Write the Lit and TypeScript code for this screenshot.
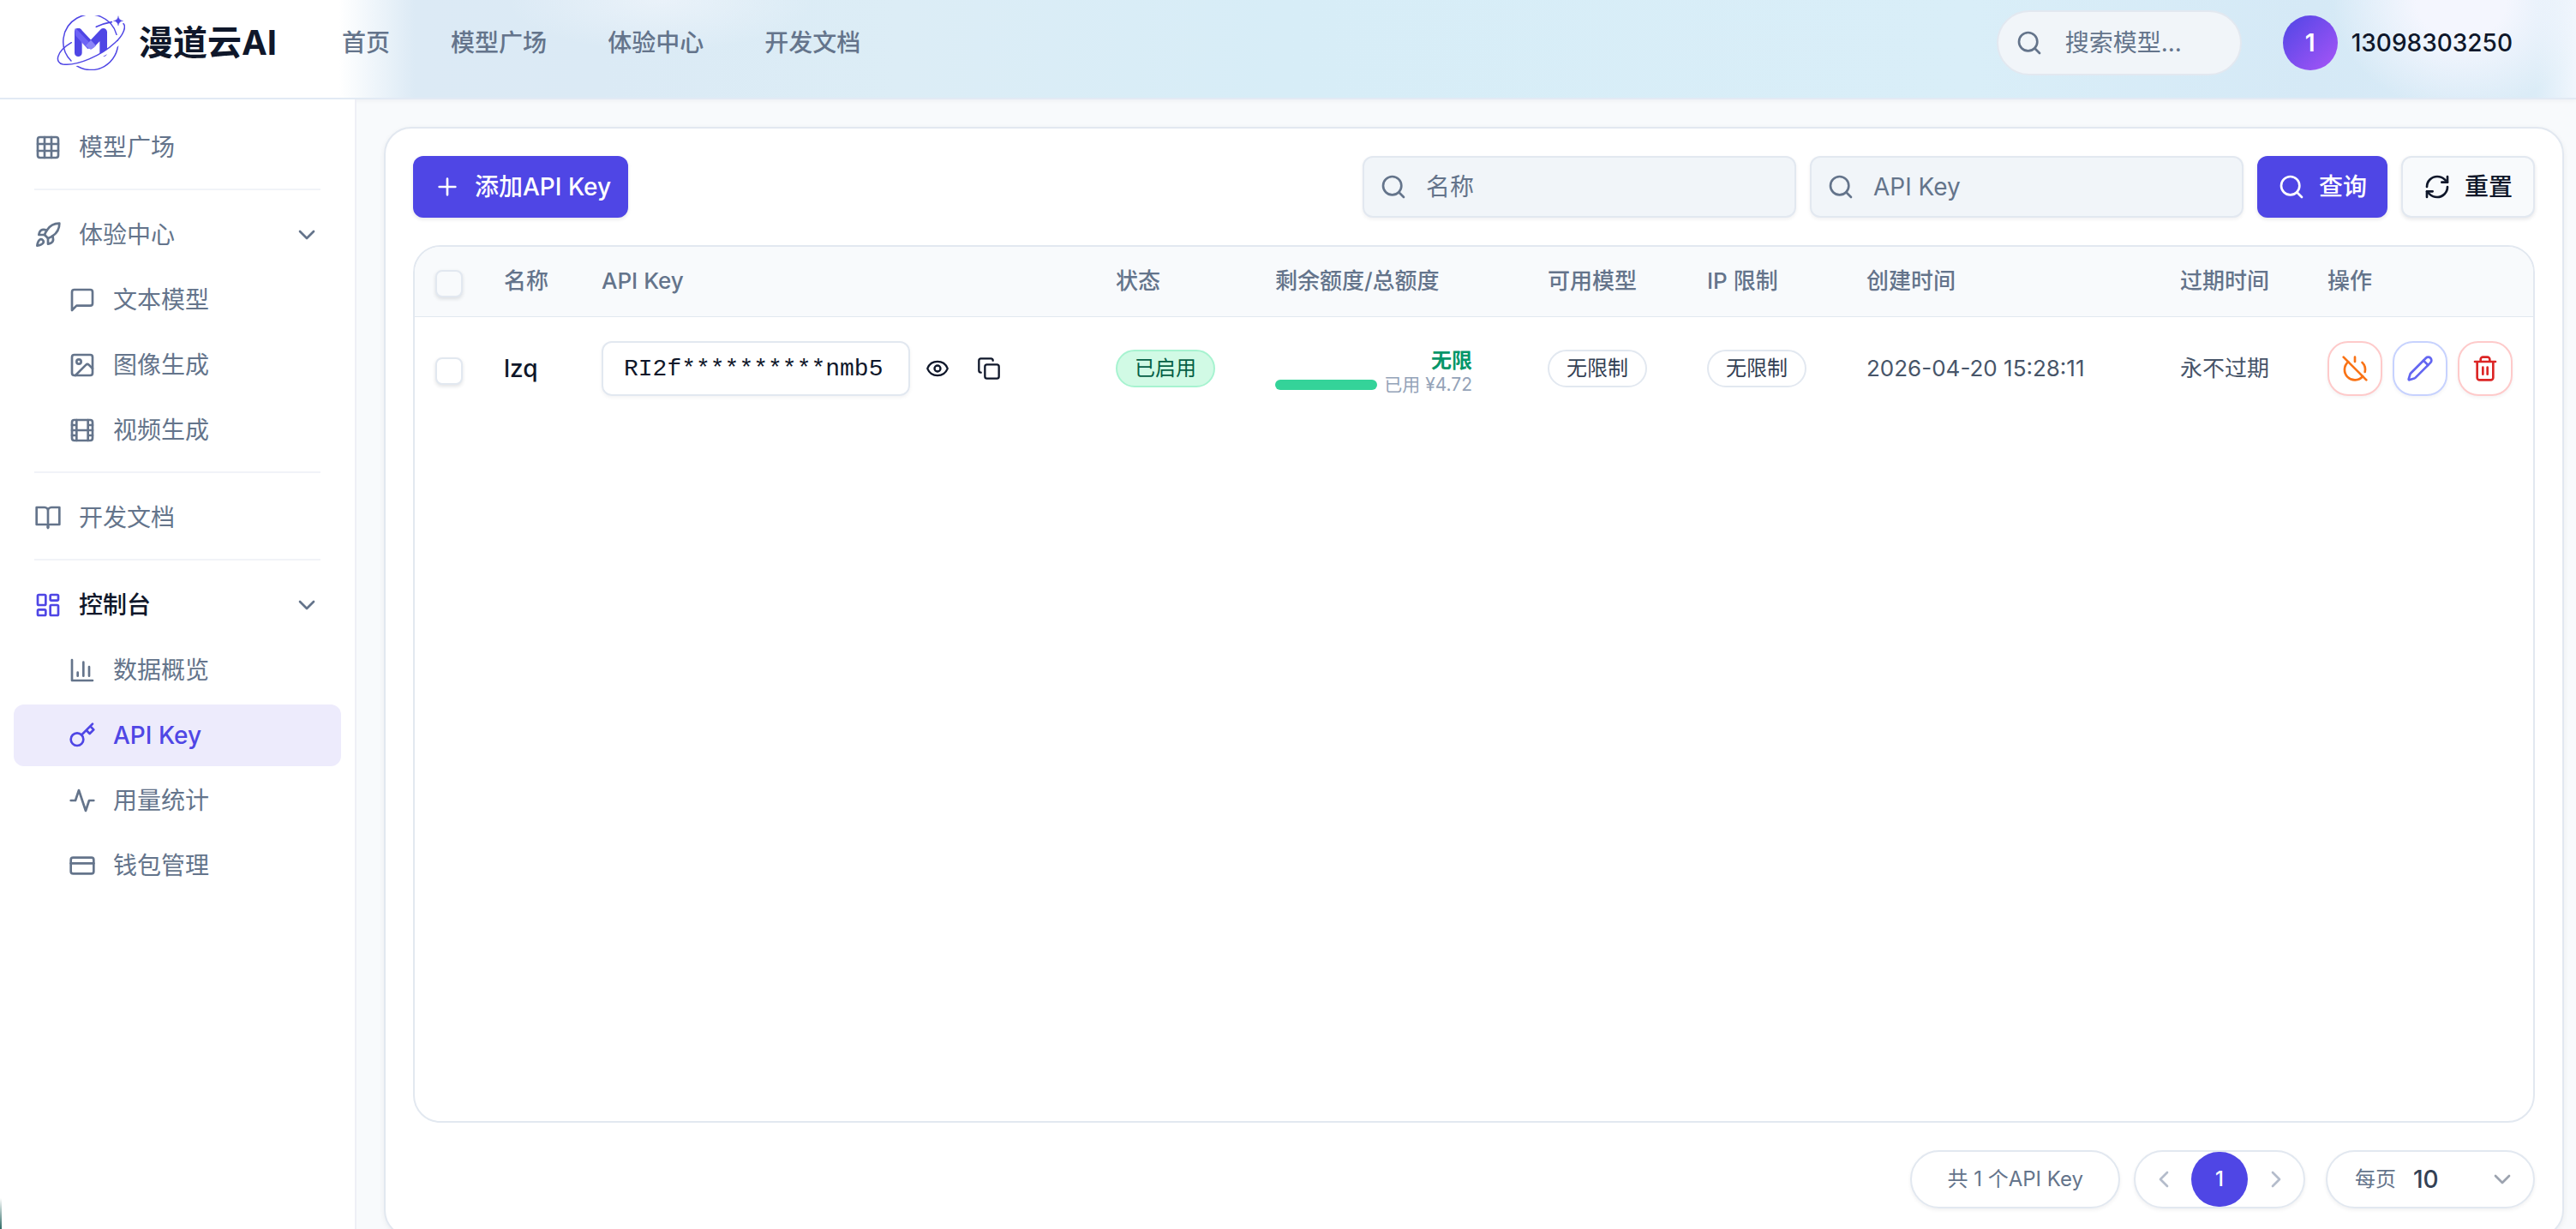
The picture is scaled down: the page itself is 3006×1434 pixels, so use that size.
import { LitElement, html, css, svg, nothing, TemplateResult } from "lit";
import { customElement } from "lit/decorators.js";
import { classMap } from "lit/directives/class-map.js";

const shapes: Record<string, TemplateResult> = {
  grid: svg`<rect x="3" y="3" width="18" height="18" rx="2"/><path d="M3 9h18M3 15h18M9 3v18M15 3v18"/>`,
  rocket: svg`<path d="M4.5 16.5c-1.5 1.26-2 5-2 5s3.74-.5 5-2c.71-.84.7-2.13-.09-2.91a2.18 2.18 0 0 0-2.91-.09z"/><path d="m12 15-3-3a22 22 0 0 1 2-3.95A12.88 12.88 0 0 1 22 2c0 2.72-.78 7.5-6 11a22.35 22.35 0 0 1-4 2z"/><path d="M9 12H4s.55-3.03 2-4c1.62-1.08 5 0 5 0"/><path d="M12 15v5s3.03-.55 4-2c1.08-1.62 0-5 0-5"/>`,
  message: svg`<path d="M21 15a2 2 0 0 1-2 2H7l-4 4V5a2 2 0 0 1 2-2h14a2 2 0 0 1 2 2z"/>`,
  image: svg`<rect x="3" y="3" width="18" height="18" rx="2"/><circle cx="9" cy="9" r="2"/><path d="m21 15-3.086-3.086a2 2 0 0 0-2.828 0L6 21"/>`,
  film: svg`<rect x="3" y="3" width="18" height="18" rx="2"/><path d="M7 3v18M17 3v18M3 12h18M3 7.5h4M3 16.5h4M17 7.5h4M17 16.5h4"/>`,
  book: svg`<path d="M12 21V6a3 3 0 0 0-3-3H2v15h8a2 2 0 0 1 2 3a2 2 0 0 1 2-3h8V3h-7a3 3 0 0 0-3 3"/>`,
  dashboard: svg`<rect x="3" y="3" width="7" height="9" rx="1"/><rect x="14" y="3" width="7" height="5" rx="1"/><rect x="14" y="12" width="7" height="9" rx="1"/><rect x="3" y="16" width="7" height="5" rx="1"/>`,
  chart: svg`<path d="M3 3v18h18M18 17V9M13 17V5M8 17v-3"/>`,
  key: svg`<circle cx="7.5" cy="15.5" r="5.5"/><path d="m21 2-9.6 9.6M15.5 7.5l3 3L22 7l-3-3"/>`,
  activity: svg`<path d="M22 12h-4l-3 9L9 3l-3 9H2"/>`,
  card: svg`<rect x="2" y="5" width="20" height="14" rx="2"/><path d="M2 10h20"/>`,
  down: svg`<path d="m6 9 6 6 6-6"/>`,
  left: svg`<path d="m15 18-6-6 6-6"/>`,
  right: svg`<path d="m9 18 6-6-6-6"/>`,
  search: svg`<circle cx="11" cy="11" r="8"/><path d="m21 21-4.3-4.3"/>`,
  plus: svg`<path d="M5 12h14M12 5v14"/>`,
  refresh: svg`<path d="M3 12a9 9 0 0 1 9-9 9.75 9.75 0 0 1 6.74 2.74L21 8"/><path d="M21 3v5h-5"/><path d="M21 12a9 9 0 0 1-9 9 9.75 9.75 0 0 1-6.74-2.74L3 16"/><path d="M8 16H3v5"/>`,
  eye: svg`<path d="M2.062 12.348a1 1 0 0 1 0-.696 10.75 10.75 0 0 1 19.876 0 1 1 0 0 1 0 .696 10.75 10.75 0 0 1-19.876 0"/><circle cx="12" cy="12" r="3"/>`,
  copy: svg`<rect x="8" y="8" width="14" height="14" rx="2"/><path d="M4 16c-1.1 0-2-.9-2-2V4c0-1.1.9-2 2-2h10c1.1 0 2 .9 2 2"/>`,
  powerOff: svg`<path d="M18.36 6.64A9 9 0 0 1 20.77 15"/><path d="M6.16 6.16a9 9 0 1 0 12.68 12.68"/><path d="M12 2v4"/><path d="m2 2 20 20"/>`,
  pencil: svg`<path d="M21.174 6.812a1 1 0 0 0-3.986-3.987L3.842 16.174a2 2 0 0 0-.5.83l-1.321 4.352a.5.5 0 0 0 .623.622l4.353-1.32a2 2 0 0 0 .83-.497z"/><path d="m15 5 4 4"/>`,
  trash: svg`<path d="M3 6h18M19 6v14c0 1-1 2-2 2H7c-1 0-2-1-2-2V6M8 6V4c0-1 1-2 2-2h4c1 0 2 1 2 2v2M10 11v6M14 11v6"/>`,
};

const icon = (name: string, size = 32, stroke = 2) => html`
  <svg class="icon" width=${size} height=${size} viewBox="0 0 24 24" fill="none" stroke="currentColor"
    stroke-width=${stroke} stroke-linecap="round" stroke-linejoin="round" aria-hidden="true">${shapes[name]}</svg>`;

interface NavEntry {
  label: string;
  icon: string;
  active?: boolean;
  children?: NavEntry[];
}

const sections: NavEntry[] = [
  { label: "模型广场", icon: "grid" },
  {
    label: "体验中心",
    icon: "rocket",
    children: [
      { label: "文本模型", icon: "message" },
      { label: "图像生成", icon: "image" },
      { label: "视频生成", icon: "film" },
    ],
  },
  { label: "开发文档", icon: "book" },
  {
    label: "控制台",
    icon: "dashboard",
    active: true,
    children: [
      { label: "数据概览", icon: "chart" },
      { label: "API Key", icon: "key", active: true },
      { label: "用量统计", icon: "activity" },
      { label: "钱包管理", icon: "card" },
    ],
  },
];

const base = css`
  :host {
    display: block;
    font-family: Inter, "Noto Sans CJK SC", sans-serif;
    font-size: 28px;
    line-height: 40px;
    color: #0f172a;
  }
  * {
    box-sizing: border-box;
  }
  a {
    color: inherit;
    text-decoration: none;
  }
  button,
  input,
  select {
    font: inherit;
    color: inherit;
    margin: 0;
    padding: 0;
    border: 0;
    background: none;
    outline: none;
  }
  button {
    cursor: pointer;
  }
  .icon {
    display: block;
    flex: none;
  }
  input::placeholder {
    color: #64748b;
    opacity: 1;
  }
`;

@customElement("top-bar")
class TopBar extends LitElement {
  static styles = [
    base,
    css`
      .bar {
        display: flex;
        align-items: center;
        height: 116px;
        padding: 0 74px 14px 66px;
        border-bottom: 2px solid #e2eaf4;
        box-shadow: 0 2px 4px rgba(15, 23, 42, 0.04);
        background:
          radial-gradient(ellipse 150px 130px at 2872px 0, #f4f6fe 35%, rgba(244, 246, 254, 0) 100%),
          radial-gradient(ellipse 180px 60px at 770px 0, rgba(240, 245, 251, 0.7), rgba(240, 245, 251, 0)),
          linear-gradient(90deg, #fff 0, #fff 396px, #dceaf5 484px, #dbeaf5 700px, #dcedf6 1050px, #d7edf7 1500px,
            #d9eef8 2300px, #d5e9f6 2700px, #dbecf7 2960px, #f0f6fd 100%);
      }
      .brand {
        display: flex;
        align-items: center;
        gap: 16px;
        font-size: 40px;
        font-weight: 700;
        margin-right: 76px;
      }
      .logo {
        display: block;
      }
      .links {
        display: flex;
        gap: 71px;
        color: #64748b;
        font-weight: 500;
      }
      .search {
        display: flex;
        align-items: center;
        gap: 26px;
        width: 286px;
        height: 76px;
        margin-left: auto;
        padding: 0 20px;
        border: 2px solid #e2e8f0;
        border-radius: 38px;
        background: #f1f5f9;
        color: #64748b;
      }
      .search input {
        width: 100%;
        min-width: 0;
      }
      .user {
        display: flex;
        align-items: center;
        gap: 16px;
        margin-left: 48px;
        font-weight: 500;
      }
      .avatar {
        display: grid;
        place-items: center;
        width: 64px;
        height: 64px;
        border-radius: 50%;
        background: linear-gradient(135deg, #4f46e5, #a855f7);
        color: #fff;
        font-weight: 600;
      }
    `,
  ];

  render() {
    return html`
      <header class="bar">
        <a class="brand" href="#">
          <svg class="logo" width="80" height="64" viewBox="48 54 240 192" fill="none" stroke="#4f46e5"
            stroke-linecap="round" stroke-linejoin="round" aria-hidden="true">
            <path d="M258 121A95 95 0 1 0 99 213M113 227A95 95 0 0 0 263 143" stroke-width="4.5" />
            <path d="M124 185V112" stroke-width="26" />
            <path d="M124 112L168 158L212 112V185" stroke-width="26" />
            <path d="M115 103L168 158L158 168L118 124Z" fill="#6d63f5" stroke="#6d63f5" stroke-width="6" />
            <path d="M168 140L186 160L168 174L150 160Z" fill="#8b85f8" stroke="none" />
            <path d="M268 148C220 196 130 232 80 225" stroke="#fff" stroke-width="14" />
            <path d="M282 83C292 92 284 122 252 150C205 194 120 232 70 225C42 220 44 182 100 149" stroke-width="4.5" />
            <path d="M187 94Q212 82 241 77" stroke-width="5" />
            <path d="M264 57Q266 71 281 73Q266 75 264 90Q262 75 247 73Q262 71 264 57Z" fill="#4f46e5" stroke-width="1" />
          </svg>
          <span>漫道云AI</span>
        </a>
        <nav class="links">
          ${["首页", "模型广场", "体验中心", "开发文档"].map((t) => html`<a href="#">${t}</a>`)}
        </nav>
        <label class="search">${icon("search")}<input type="search" aria-label="搜索模型" placeholder="搜索模型..." /></label>
        <a class="user" href="#"><span class="avatar">1</span><span>13098303250</span></a>
      </header>
    `;
  }
}

@customElement("side-nav")
class SideNav extends LitElement {
  static styles = [
    base,
    css`
      .nav {
        height: 100%;
        padding: 20px 16px;
        color: #64748b;
      }
      .section + .section {
        margin-top: 12px;
      }
      .section + .section::before {
        content: "";
        display: block;
        height: 2px;
        margin: 0 24px 16px;
        background: #f1f3f8;
      }
      .group {
        display: flex;
        flex-direction: column;
        gap: 4px;
      }
      .item {
        display: flex;
        align-items: center;
        gap: 20px;
        width: 100%;
        height: 72px;
        padding: 0 24px;
        border-radius: 12px;
        text-align: left;
        font-weight: 400;
      }
      .sub {
        padding-left: 64px;
      }
      .chevron {
        margin-left: auto;
      }
      .open {
        color: #0f172a;
        font-weight: 500;
      }
      .open .lead {
        color: #4f46e5;
      }
      .open .chevron {
        color: #64748b;
      }
      .current {
        background: #edebfc;
        color: #4f46e5;
        font-weight: 500;
      }
    `,
  ];

  private head(e: NavEntry) {
    return e.children
      ? html`<button class=${classMap({ item: true, open: !!e.active })} type="button" aria-expanded="true">
          <span class="lead">${icon(e.icon)}</span><span>${e.label}</span>
          <span class="chevron">${icon("down")}</span>
        </button>`
      : html`<a class="item" href="#">${icon(e.icon)}<span>${e.label}</span></a>`;
  }

  render() {
    return html`
      <nav class="nav">
        ${sections.map(
          (s) => html`
            <div class="section">
              <div class="group">
                ${this.head(s)}
                ${(s.children ?? []).map(
                  (c) => html`<a class=${classMap({ item: true, sub: true, current: !!c.active })} href="#"
                    aria-current=${c.active ? "page" : nothing}>${icon(c.icon)}<span>${c.label}</span></a>`
                )}
              </div>
            </div>
          `
        )}
      </nav>
    `;
  }
}

@customElement("key-panel")
class KeyPanel extends LitElement {
  static styles = [
    base,
    css`
      .panel {
        display: flex;
        flex-direction: column;
        gap: 32px;
        height: 100%;
        padding: 32px;
        border: 2px solid #e2e8f0;
        border-radius: 32px;
        background: #fff;
        box-shadow: 0 2px 6px rgba(15, 23, 42, 0.06);
      }
      .toolbar {
        display: flex;
        gap: 16px;
      }
      .btn {
        display: flex;
        align-items: center;
        gap: 16px;
        height: 72px;
        padding: 0 24px;
        border-radius: 12px;
        font-weight: 500;
        white-space: nowrap;
        box-shadow: 0 2px 4px rgba(15, 23, 42, 0.1);
      }
      .primary {
        background: #4f46e5;
        color: #fff;
      }
      .plain {
        border: 2px solid #e2e8f0;
        background: #f8fafc;
      }
      .first {
        margin-right: auto;
        padding-right: 20px;
      }
      .field {
        display: flex;
        align-items: center;
        gap: 22px;
        width: 506px;
        height: 72px;
        padding: 0 18px;
        border: 2px solid #e2e8f0;
        border-radius: 12px;
        background: #f1f5f9;
        color: #64748b;
        box-shadow: 0 2px 4px rgba(15, 23, 42, 0.06);
      }
      .field input {
        flex: 1;
        min-width: 0;
      }
      .frame {
        flex: 1;
        border: 2px solid #e2e8f0;
        border-radius: 32px;
        overflow: hidden;
      }
      .keys {
        width: 100%;
        table-layout: fixed;
        border-collapse: collapse;
        text-align: left;
        white-space: nowrap;
      }
      .keys th {
        height: 81px;
        padding: 0 24px;
        border-bottom: 1px solid #e2e8f0;
        background: #f8fafc;
        color: #64748b;
        font-size: 26px;
        font-weight: 500;
      }
      .keys td {
        height: 122px;
        padding: 0 24px;
      }
      .c-check { width: 80px; }
      .c-name { width: 114px; }
      .c-key { width: 600px; }
      .c-state { width: 186px; }
      .c-quota { width: 318px; }
      .c-time { width: 366px; }
      .c-expire { width: 172px; }
      .c-ops { width: 264px; }
      .check {
        display: block;
        appearance: none;
        width: 32px;
        height: 32px;
        margin-top: 6px;
        border: 2px solid #e2e8f0;
        border-radius: 8px;
        background: #fff;
        box-shadow: 0 2px 4px rgba(15, 23, 42, 0.12);
      }
      .keys th .check {
        background: #f8fafc;
      }
      .name {
        font-weight: 500;
      }
      .secret {
        display: flex;
        align-items: center;
      }
      .secret input {
        width: 360px;
        height: 64px;
        margin-right: 18px;
        padding: 0 24px;
        border: 2px solid #e2e8f0;
        border-radius: 12px;
        font-family: "Liberation Mono", monospace;
        box-shadow: 0 2px 4px rgba(15, 23, 42, 0.05);
      }
      .ghost {
        margin-right: 32px;
      }
      .badge {
        display: inline-flex;
        align-items: center;
        height: 44px;
        padding: 0 20px;
        border: 2px solid #e2e8f0;
        border-radius: 22px;
        color: #334155;
        font-size: 24px;
        font-weight: 400;
      }
      .on {
        border-color: #a7f3d0;
        background: #d1fae5;
        color: #065f46;
      }
      .quota {
        display: flex;
        flex-direction: column;
        align-items: flex-end;
        width: 230px;
        padding-top: 10px;
        font-size: 21px;
        line-height: 28px;
        color: #94a3b8;
      }
      .left {
        color: #059669;
        font-size: 24px;
        font-weight: 600;
      }
      .used {
        display: flex;
        align-items: center;
        gap: 8px;
        width: 100%;
      }
      .meter {
        flex: 1;
        height: 12px;
        border-radius: 6px;
        background: #34d399;
      }
      .date {
        color: #475569;
        font-size: 26px;
      }
      .ops {
        display: flex;
        gap: 12px;
      }
      .op {
        display: grid;
        place-items: center;
        width: 64px;
        height: 64px;
        border: 2px solid #fecaca;
        border-radius: 24px;
        background: #fff;
        box-shadow: 0 2px 4px rgba(15, 23, 42, 0.05);
      }
      .stop { color: #f97316; }
      .edit { color: #6366f1; border-color: #c7d2fe; }
      .remove { color: #dc2626; }
      .footer {
        display: flex;
        justify-content: flex-end;
        color: #64748b;
        font-size: 24px;
      }
      .pill {
        display: flex;
        align-items: center;
        height: 68px;
        border: 2px solid #e2e8f0;
        border-radius: 34px;
        background: #fff;
        box-shadow: 0 2px 4px rgba(15, 23, 42, 0.06);
      }
      .total {
        padding: 0 41px;
      }
      .pager {
        width: 200px;
        margin: 0 24px 0 16px;
      }
      .page {
        display: grid;
        flex: 1;
        place-items: center;
        height: 64px;
        border-radius: 32px;
        color: #b4bccb;
      }
      .here {
        flex: none;
        width: 66px;
        background: #4f46e5;
        color: #fff;
        font-weight: 500;
      }
      .size {
        gap: 20px;
        width: 244px;
        padding: 0 20px 0 32px;
      }
      .choice {
        display: grid;
        flex: 1;
        align-items: center;
        color: #334155;
        font-size: 28px;
        font-weight: 500;
      }
      .choice select {
        grid-area: 1 / 1;
        appearance: none;
        width: 100%;
      }
      .arrow {
        grid-area: 1 / 1;
        justify-self: end;
        color: #9ca3af;
        pointer-events: none;
      }
    `,
  ];

  render() {
    return html`
      <section class="panel">
        <div class="toolbar">
          <button class="btn primary first" type="button">${icon("plus")}<span>添加API Key</span></button>
          <label class="field">${icon("search")}<input type="text" aria-label="名称" placeholder="名称" /></label>
          <label class="field">${icon("search")}<input type="text" aria-label="API Key" placeholder="API Key" /></label>
          <button class="btn primary" type="button">${icon("search")}<span>查询</span></button>
          <button class="btn plain" type="button">${icon("refresh")}<span>重置</span></button>
        </div>
        <div class="frame">
          <table class="keys">
            <thead>
              <tr>
                <th class="c-check"><input class="check" type="checkbox" aria-label="全选" /></th>
                <th class="c-name">名称</th>
                <th class="c-key">API Key</th>
                <th class="c-state">状态</th>
                <th class="c-quota">剩余额度/总额度</th>
                <th class="c-state">可用模型</th>
                <th class="c-state">IP 限制</th>
                <th class="c-time">创建时间</th>
                <th class="c-expire">过期时间</th>
                <th class="c-ops">操作</th>
              </tr>
            </thead>
            <tbody>
              <tr>
                <td><input class="check" type="checkbox" aria-label="选择 lzq" /></td>
                <td class="name">lzq</td>
                <td>
                  <div class="secret">
                    <input type="text" readonly aria-label="API Key" .value=${"RI2f**********nmb5"} />
                    <button class="ghost" type="button" aria-label="显示">${icon("eye", 28)}</button>
                    <button class="ghost" type="button" aria-label="复制">${icon("copy", 28)}</button>
                  </div>
                </td>
                <td><span class="badge on">已启用</span></td>
                <td>
                  <div class="quota">
                    <span class="left">无限</span>
                    <div class="used"><span class="meter"></span><span>已用 ¥4.72</span></div>
                  </div>
                </td>
                <td><span class="badge">无限制</span></td>
                <td><span class="badge">无限制</span></td>
                <td class="date">2026-04-20 15:28:11</td>
                <td class="date">永不过期</td>
                <td>
                  <div class="ops">
                    <button class="op stop" type="button" aria-label="停用">${icon("powerOff")}</button>
                    <button class="op edit" type="button" aria-label="编辑">${icon("pencil")}</button>
                    <button class="op remove" type="button" aria-label="删除">${icon("trash")}</button>
                  </div>
                </td>
              </tr>
            </tbody>
          </table>
        </div>
        <div class="footer">
          <span class="pill total">共 1 个API Key</span>
          <nav class="pill pager" aria-label="分页">
            <button class="page" type="button" aria-label="上一页">${icon("left")}</button>
            <button class="page here" type="button" aria-current="page">1</button>
            <button class="page" type="button" aria-label="下一页">${icon("right")}</button>
          </nav>
          <label class="pill size">
            <span>每页</span>
            <span class="choice">
              <select>
                <option>10</option>
                <option>20</option>
                <option>50</option>
              </select>
              <span class="arrow">${icon("down")}</span>
            </span>
          </label>
        </div>
      </section>
    `;
  }
}

@customElement("app-root")
class AppRoot extends LitElement {
  static styles = [
    base,
    css`
      .shell {
        display: flex;
        flex-direction: column;
        height: 100vh;
        overflow: hidden;
        background: #f8fafc;
      }
      .body {
        display: flex;
        flex: 1;
        min-height: 0;
      }
      .side {
        flex: none;
        width: 416px;
        border-right: 2px solid #eeeff6;
        background: linear-gradient(0deg, #2f6b66, #fff) left bottom / 2px 36px no-repeat #fff;
      }
      .main {
        flex: 1;
        min-width: 0;
        margin-bottom: -10px;
        padding: 32px 14px 0 32px;
      }
      .panel {
        height: 100%;
      }
    `,
  ];

  render() {
    return html`
      <div class="shell">
        <top-bar></top-bar>
        <div class="body">
          <side-nav class="side"></side-nav>
          <main class="main"><key-panel class="panel"></key-panel></main>
        </div>
      </div>
    `;
  }
}
